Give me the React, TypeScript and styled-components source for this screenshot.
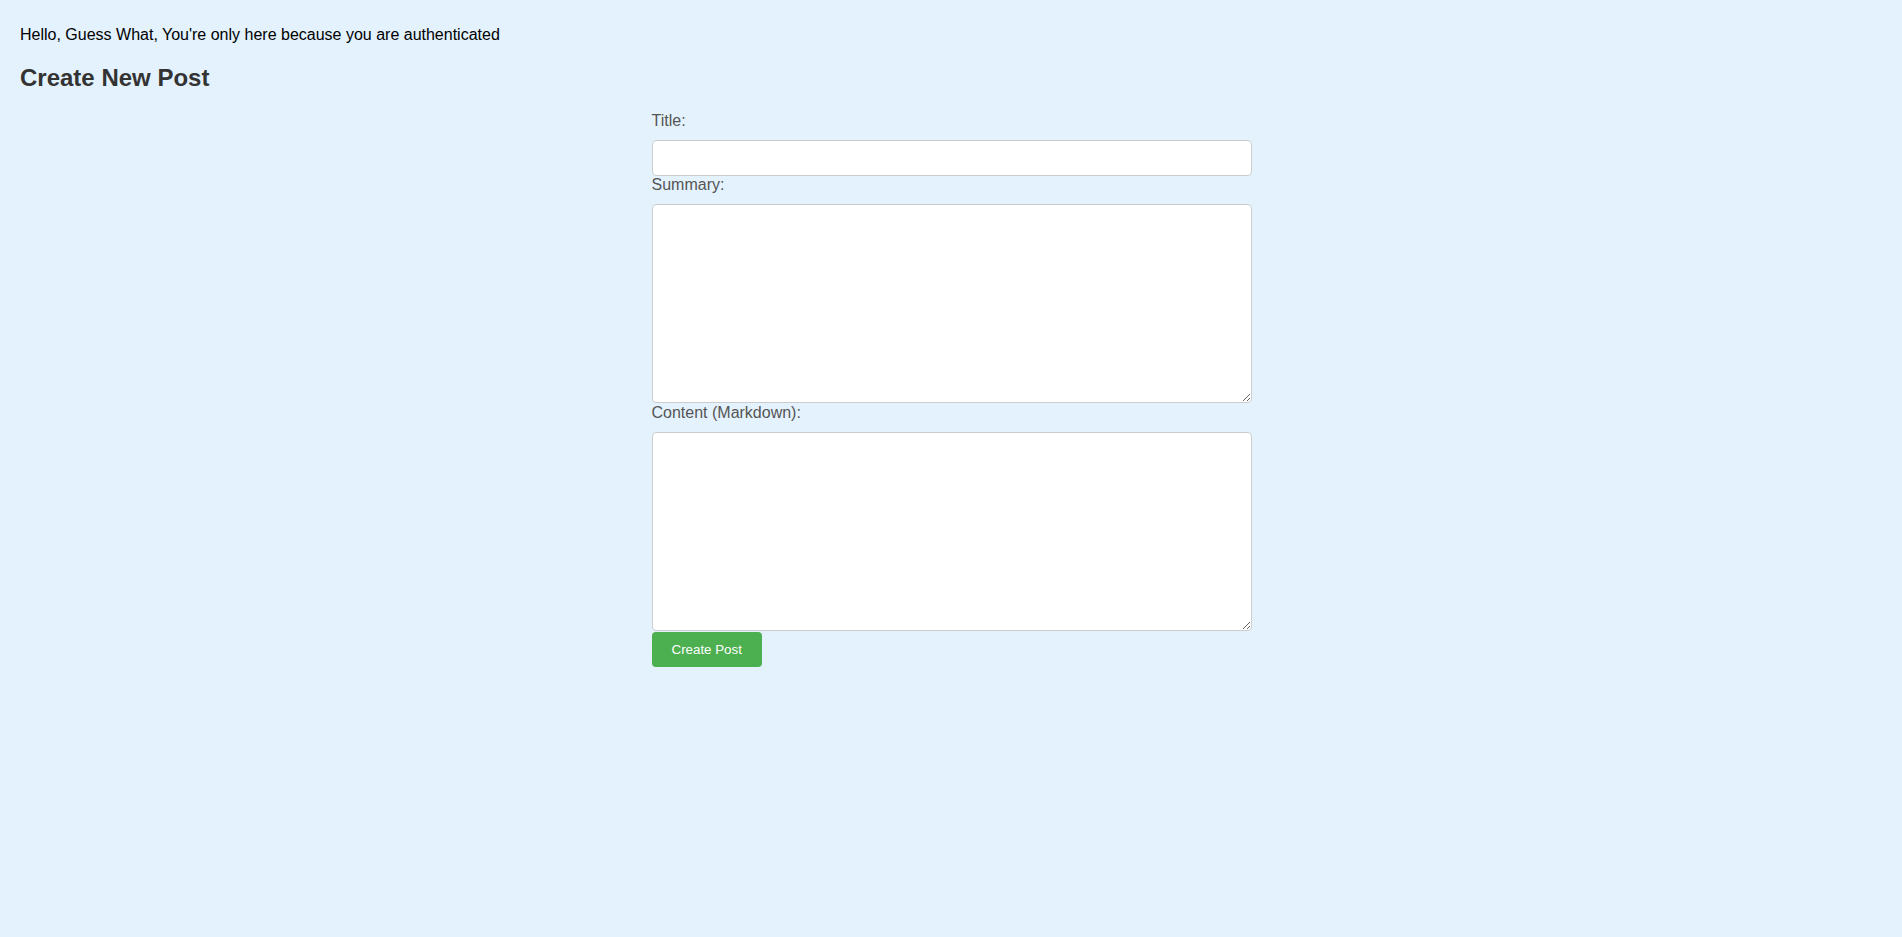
import styled, { createGlobalStyle } from "styled-components";

const GlobalStyle = createGlobalStyle`
  html, body {
    margin: 0;
    padding: 0;
    background-color: #e3f2fd;
    font-family: "Liberation Sans", Arial, sans-serif;
  }
  body {
    min-height: 100vh;
  }
`;

const Page = styled.div`
  padding: 26px 20px 20px 21px;
  color: #000;
`;

const Greeting = styled.p`
  margin: 0 0 0 -1px;
  font-size: 16px;
`;

const Heading = styled.h2`
  margin: 20px 0 20px -1px;
  font-size: 24px;
  font-weight: bold;
  color: #333;
`;

const Form = styled.form`
  display: flex;
  flex-direction: column;
  align-items: flex-start;
  max-width: 600px;
  margin: 0 auto;
`;

const Label = styled.label`
  display: block;
  margin-bottom: 10px;
  font-size: 16px;
  color: #555;
`;

const TextInput = styled.input`
  box-sizing: border-box;
  width: 100%;
  height: 36px;
  padding: 8px;
  border: 1px solid #ccc;
  border-radius: 4px;
  background: #fff;
  font-family: inherit;
  font-size: 16px;
  outline: none;
`;

const TextArea = styled.textarea`
  box-sizing: border-box;
  display: block;
  width: 100%;
  height: 199px;
  margin-bottom: 1px;
  padding: 8px;
  border: 1px solid #ccc;
  border-radius: 4px;
  background: #fff;
  font-family: inherit;
  font-size: 16px;
  outline: none;
`;

const SubmitButton = styled.button`
  padding: 10px 20px;
  border: none;
  border-radius: 4px;
  background-color: #4caf50;
  color: #fff;
  font-family: inherit;
  font-size: 13.333px;
  cursor: pointer;
`;

const fields = [
  { id: "summary", label: "Summary:" },
  { id: "content", label: "Content (Markdown):" },
];

const App = () => (
  <>
    <GlobalStyle />
    <Page>
      <Greeting>
        Hello, Guess What, You're only here because you are authenticated
      </Greeting>
      <Heading>Create New Post</Heading>
      <Form onSubmit={(e) => e.preventDefault()}>
        <Label htmlFor="title">Title:</Label>
        <TextInput id="title" type="text" />
        {fields.map(({ id, label }) => (
          <>
            <Label key={`${id}-label`} htmlFor={id}>
              {label}
            </Label>
            <TextArea key={id} id={id} />
          </>
        ))}
        <SubmitButton type="submit">Create Post</SubmitButton>
      </Form>
    </Page>
  </>
);

export default App;
